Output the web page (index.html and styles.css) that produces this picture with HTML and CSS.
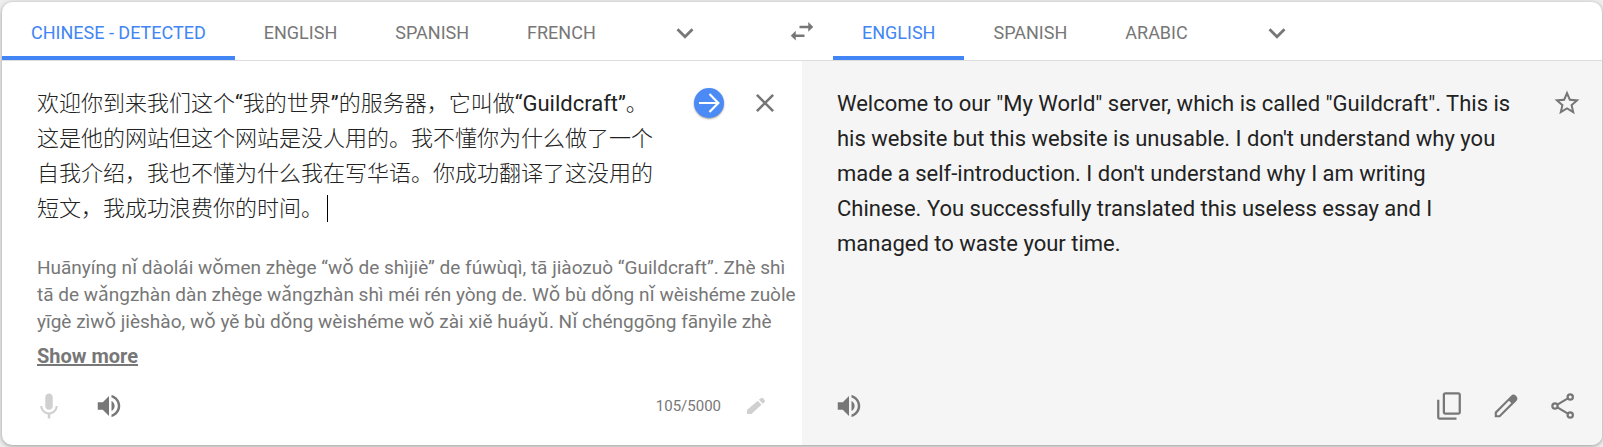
FILE: index.html
```html
<!DOCTYPE html>
<html lang="en">
<head>
    <meta charset="UTF-8">
    <meta name="viewport" content="width=device-width, initial-scale=1.0">
    <title>Translate</title>
    <link rel="stylesheet" href="styles.css">
</head>
<body>
    <main class="translator">
        <header class="languages">
            <div class="lang-list">
                <button type="button" class="tab active">CHINESE - DETECTED</button>
                <button type="button" class="tab">ENGLISH</button>
                <button type="button" class="tab">SPANISH</button>
                <button type="button" class="tab">FRENCH</button>
                <button type="button" class="icon-btn more" aria-label="More source languages">
                    <svg class="icon" viewBox="0 0 24 24"><path d="M6 9l6 6 6-6" fill="none" stroke="currentColor" stroke-width="2.2"/></svg>
                </button>
            </div>
            <button type="button" class="icon-btn swap" aria-label="Swap languages">
                <svg class="icon" viewBox="0 0 24 24"><path d="M6.990 11.800L3 15.700l3.990 3.900v-2.900H14v-2H6.990v-2.900zM21 8.700l-3.990-3.900v2.900H10v2h7.010v2.900L21 8.700z"/></svg>
            </button>
            <div class="lang-list">
                <button type="button" class="tab active">ENGLISH</button>
                <button type="button" class="tab">SPANISH</button>
                <button type="button" class="tab">ARABIC</button>
                <button type="button" class="icon-btn more" aria-label="More target languages">
                    <svg class="icon" viewBox="0 0 24 24"><path d="M6 9l6 6 6-6" fill="none" stroke="currentColor" stroke-width="2.2"/></svg>
                </button>
            </div>
        </header>

        <div class="panes">
            <section class="pane source">
                <div class="pane-top">
                    <div class="input-wrap">
                        <textarea class="text source-text" rows="4" lang="zh-CN" aria-label="Source text" spellcheck="false">欢迎你到来我们这个“我的世界”的服务器，它叫做“Guildcraft”。这是他的网站但这个网站是没人用的。我不懂你为什么做了一个自我介绍，我也不懂为什么我在写华语。你成功翻译了这没用的短文，我成功浪费你的时间。</textarea>
                        <span class="caret"></span>
                    </div>
                    <button type="button" class="icon-btn go" aria-label="Translate">
                        <svg class="icon" viewBox="0 0 30 30"><path d="M5 15h19M15.500 6l8.800 9-8.800 9" fill="none" stroke="currentColor" stroke-width="2.200"/></svg>
                    </button>
                    <button type="button" class="icon-btn" aria-label="Clear text">
                        <svg class="icon" viewBox="0 0 24 24"><path d="M5.500 5.500l13 13M18.500 5.500l-13 13" fill="none" stroke="currentColor" stroke-width="2.100"/></svg>
                    </button>
                </div>
                <p class="pinyin">Huānyíng nǐ dàolái wǒmen zhège “wǒ de shìjiè” de fúwùqì, tā jiàozuò “Guildcraft”. Zhè shì tā de wǎngzhàn dàn zhège wǎngzhàn shì méi rén yòng de. Wǒ bù dǒng nǐ wèishéme zuòle yīgè zìwǒ jièshào, wǒ yě bù dǒng wèishéme wǒ zài xiě huáyǔ. Nǐ chénggōng fānyìle zhè</p>
                <a class="show-more" href="#">Show more</a>
                <div class="tools">
                    <button type="button" class="icon-btn disabled" aria-label="Voice input" disabled>
                        <svg class="icon" viewBox="0 0 24 24"><path d="M12 15c1.660 0 3-1.340 3-3V5c0-1.660-1.340-3-3-3S9 3.340 9 5v7c0 1.660 1.340 3 3 3zM19 12h-1.700c0 3-2.540 5.100-5.300 5.100S6.700 15 6.700 12H5c0 3.410 2.720 6.230 6 6.720V22h2v-3.280c3.280-.490 6-3.310 6-6.720z"/></svg>
                    </button>
                    <button type="button" class="icon-btn" aria-label="Listen to source">
                        <svg class="icon" viewBox="0 0 24 24"><path d="M3 9v6h4l5 5V4L7 9H3zm13.500 3c0-1.770-1.020-3.290-2.500-4.030v8.050c1.480-.730 2.500-2.250 2.500-4.020zM14 3.230v2.060c2.890.860 5 3.540 5 6.710s-2.110 5.850-5 6.710v2.060c4.010-.910 7-4.490 7-8.770s-2.990-7.860-7-8.770z"/></svg>
                    </button>
                    <span class="counter">105/5000</span>
                    <button type="button" class="icon-btn small disabled" aria-label="Handwriting" disabled>
                        <svg class="icon" viewBox="0 0 24 24"><path d="M3 16V20h4.500L17.500 10.800l-3.800-4.100L3 16zM20.600 8a1.500 1.500 0 0 0 0-2l-1.300-1.500a2 2 0 0 0-2.600-.300L14.900 5.700l3.800 4.100 1.900-1.800z"/></svg>
                    </button>
                </div>
            </section>

            <section class="pane target">
                <div class="pane-top">
                    <p class="text target-text">
                        Welcome to our "My World" server, which is called "Guildcraft". This is<br>
                        his website but this website is unusable. I don't understand why you<br>
                        made a self-introduction. I don't understand why I am writing<br>
                        Chinese. You successfully translated this useless essay and I<br>
                        managed to waste your time.
                    </p>
                    <button type="button" class="icon-btn" aria-label="Save translation">
                        <svg class="icon" viewBox="0 0 24 24"><path d="M22 9.240l-7.190-.620L12 2 9.190 8.630 2 9.240l5.460 4.730L5.820 21 12 17.270 18.180 21l-1.630-7.030L22 9.240zM12 15.400l-3.760 2.270 1-4.280-3.320-2.880 4.380-.380L12 6.100l1.710 4.040 4.380.380-3.320 2.880 1 4.280L12 15.400z"/></svg>
                    </button>
                </div>
                <div class="tools">
                    <button type="button" class="icon-btn listen" aria-label="Listen to translation">
                        <svg class="icon" viewBox="0 0 24 24"><path d="M3 9v6h4l5 5V4L7 9H3zm13.500 3c0-1.770-1.020-3.290-2.500-4.030v8.050c1.480-.730 2.500-2.250 2.500-4.020zM14 3.230v2.060c2.890.860 5 3.540 5 6.710s-2.110 5.850-5 6.710v2.060c4.010-.910 7-4.490 7-8.770s-2.990-7.860-7-8.770z"/></svg>
                    </button>
                    <button type="button" class="icon-btn" aria-label="Copy translation">
                        <svg class="icon" viewBox="0 0 24 24"><path d="M18 23H4.500c-1.100 0-2-.900-2-2V7h1.800v14.200H18V23zM19.500 1H9c-1.100 0-2 .900-2 2v14c0 1.100.900 2 2 2h10.500c1.100 0 2-.900 2-2V3c0-1.100-.900-2-2-2zm.200 16.200H8.800V2.800h10.900v14.400z"/></svg>
                    </button>
                    <button type="button" class="icon-btn" aria-label="Suggest an edit">
                        <svg class="icon" viewBox="0 0 24 24"><path d="M20.100 3.900a3 3 0 0 0-4.200 0L3 16.800V21h4.200L20.100 8.100a3 3 0 0 0 0-4.200zM6.500 19.300H4.700v-1.800l9.700-9.700 1.800 1.800-9.700 9.700z"/></svg>
                    </button>
                    <button type="button" class="icon-btn" aria-label="Share translation">
                        <svg class="icon" viewBox="0 0 24 24"><g fill="none" stroke="currentColor" stroke-width="1.800"><circle cx="17.800" cy="4.800" r="2.100"/><circle cx="5.600" cy="12" r="2.100"/><circle cx="17.800" cy="19.200" r="2.100"/><path d="M7.500 10.900l8.400-5M7.500 13.100l8.400 5"/></g></svg>
                    </button>
                </div>
            </section>
        </div>
    </main>
</body>
</html>
```
FILE: styles.css
```css
* {
    box-sizing: border-box;
}
body {
    margin: 0;
    padding: 2px 1px 2px 2px;
    background-color: #eee;
    font-family: Roboto, "Noto Sans CJK SC", sans-serif;
    color: #222;
}
.translator {
    background-color: #fff;
    border-radius: 10px;
    box-shadow: 0 1px 4px rgba(0, 0, 0, 0.37);
    overflow: hidden;
}
button {
    border: none;
    background: none;
    padding: 0;
    font-family: inherit;
    color: #777;
    cursor: pointer;
}

/* Language bar */
.languages {
    display: grid;
    grid-template-columns: 1fr 62px 1fr;
    border-bottom: 1px solid #ddd;
}
.lang-list {
    display: flex;
    align-items: stretch;
}
.tab {
    height: 58px;
    padding: 6px 29px 0;
    border-bottom: 4px solid transparent;
    font-size: 18px;
    white-space: nowrap;
}
.tab.active {
    color: #4285f4;
    border-bottom-color: #4285f4;
}
.icon-btn {
    display: flex;
    flex: none;
    align-items: center;
    justify-content: center;
    width: 30px;
    height: 30px;
}
.icon {
    width: 100%;
    height: 100%;
    fill: currentColor;
}
.more {
    align-self: center;
    margin: 4px 0 0 45px;
}
.swap {
    align-self: center;
    justify-self: center;
}

/* Text panes */
.panes {
    display: grid;
    grid-template-columns: 1fr 1fr;
}
.pane {
    display: flex;
    flex-direction: column;
    padding: 25px 6px 24px 35px;
}
.target {
    background-color: #f5f5f5;
}
.pane-top {
    display: flex;
    align-items: flex-start;
    margin-right: 16px;
}
.target .pane-top {
    margin-right: 14px;
}
.text {
    margin: 0;
    font-size: 22px;
    line-height: 35px;
}
.input-wrap {
    position: relative;
    flex: 1;
    margin-right: 31px;
}
.source-text {
    display: block;
    width: 100%;
    padding: 0;
    border: none;
    outline: none;
    resize: none;
    overflow: hidden;
    background: none;
    font-family: Roboto, "Noto Sans CJK SC Light", "Noto Sans CJK SC", sans-serif;
    color: #222;
}
.caret {
    position: absolute;
    left: 290px;
    bottom: 4px;
    width: 1px;
    height: 27px;
    background-color: #000;
}
.go {
    border-radius: 50%;
    margin-right: 26px;
    background-color: #4c8bf5;
    box-shadow: 0 1px 2px rgba(0, 0, 0, 0.4);
    color: #fff;
}
.pane-top .icon-btn {
    margin-top: 2px;
}
.pinyin {
    margin: 28px 0 8px;
    font-size: 19px;
    line-height: 27px;
    max-height: 81px;
    overflow: hidden;
    color: #777;
}
.show-more {
    align-self: flex-start;
    font-size: 20px;
    font-weight: 700;
    line-height: 27px;
    color: #777;
}
.tools {
    display: flex;
    align-items: center;
    gap: 27px;
    margin: auto 18px 0 -3px;
}
.source .tools {
    gap: 30px;
    margin-right: 28px;
    padding-top: 21px;
}
.disabled {
    color: #d0d0d0;
}
.small {
    width: 24px;
    height: 24px;
    margin-left: -7px;
}
.counter {
    margin-left: auto;
    font-size: 15px;
    color: #777;
}
.target-text {
    flex: 1;
}
.listen {
    margin-right: auto;
}
```
